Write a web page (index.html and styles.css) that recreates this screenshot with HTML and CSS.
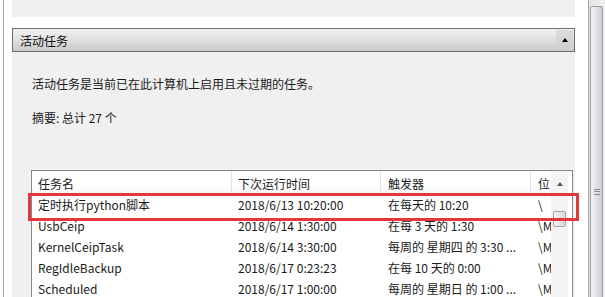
FILE: index.html
```html
<!DOCTYPE html>
<html lang="zh-CN">
  <head>
    <meta charset="UTF-8" />
    <title>活动任务</title>
    <link rel="stylesheet" href="styles.css">
  </head>

  <body>
    <div class="window">
      <div class="content">
        <div class="panel-top"></div>

        <div class="section">
          <div class="section-head">
            <span>活动任务</span>
            <span class="collapse"><span class="tri"></span></span>
          </div>
          <div class="section-body">
            <p class="desc">活动任务是当前已在此计算机上启用且未过期的任务。</p>
            <p class="summary">摘要: 总计 27 个</p>

            <div class="list">
              <div class="cols">
                <div class="row head">
                  <div class="cell">任务名</div>
                  <div class="cell">下次运行时间</div>
                  <div class="cell">触发器</div>
                  <div class="cell">位</div>
                </div>
                <div class="row">
                  <div class="cell">定时执行python脚本</div>
                  <div class="cell">2018/6/13 10:20:00</div>
                  <div class="cell">在每天的 10:20</div>
                  <div class="cell">\</div>
                </div>
                <div class="row">
                  <div class="cell">UsbCeip</div>
                  <div class="cell">2018/6/14 1:30:00</div>
                  <div class="cell">在每 3 天的 1:30</div>
                  <div class="cell">\M</div>
                </div>
                <div class="row">
                  <div class="cell">KernelCeipTask</div>
                  <div class="cell">2018/6/14 3:30:00</div>
                  <div class="cell">每周的 星期四 的 3:30 ...</div>
                  <div class="cell">\M</div>
                </div>
                <div class="row">
                  <div class="cell">RegIdleBackup</div>
                  <div class="cell">2018/6/17 0:23:23</div>
                  <div class="cell">在每 10 天的 0:00</div>
                  <div class="cell">\M</div>
                </div>
                <div class="row">
                  <div class="cell">Scheduled</div>
                  <div class="cell">2018/6/17 1:00:00</div>
                  <div class="cell">每周的 星期日 的 1:00 ...</div>
                  <div class="cell">\M</div>
                </div>
              </div>

              <div class="lscroll">
                <span class="arrow up"></span>
                <span class="lthumb"></span>
                <span class="arrow down"></span>
              </div>

              <!-- 标注框 -->
              <div class="mark"></div>
            </div>
          </div>
        </div>
      </div>

      <div class="vscroll">
        <div class="thumb"><span class="grip"></span></div>
      </div>
    </div>
  </body>
</html>
```

FILE: styles.css
```css
html,
body {
  margin: 0;
  padding: 0;
  background: #fff;
  overflow: hidden;
}

body {
  font: 12px "Noto Sans CJK SC", "Microsoft YaHei", sans-serif;
  color: #1a1a1a;
}

.window {
  display: flex;
  width: 605px;
  height: 297px;
  overflow: hidden;
}

/* 左侧细线 + 内容区 */
.content {
  width: 570px;
  margin-left: 3px;
  padding-left: 8px;
  padding-right: 13px;
  border-left: 1px solid #a9a9a9;
  box-sizing: content-box;
}

.panel-top {
  height: 17px;
  background: #f0f0f0;
}

.section {
  margin-top: 11px;
}

.section-head {
  display: flex;
  align-items: center;
  justify-content: space-between;
  height: 22px;
  padding-left: 7px;
  border: 1px solid #6e6e6e;
  background: linear-gradient(#f2f2f2, #e2e2e2 45%, #c9c9c9);
  color: #111;
}

.collapse {
  display: flex;
  align-items: center;
  justify-content: center;
  width: 17px;
  height: 20px;
  margin-right: 1px;
  background: linear-gradient(#dcdcdc, #cfcfcf);
}

.tri {
  width: 0;
  height: 0;
  border-left: 3px solid transparent;
  border-right: 3px solid transparent;
  border-bottom: 4px solid #000;
}

.section-body {
  height: 260px;
  padding: 1px 2px 0 19px;
  background: #f0f0f0;
}

.section-body p {
  margin: 0;
  padding-left: 1px;
  line-height: 16px;
}

.desc {
  margin-top: 23px !important;
}

.summary {
  margin-top: 18px !important;
}

/* 列表 */
.list {
  position: relative;
  display: flex;
  margin-top: 44px;
  height: 140px;
  border: 1px solid #828790;
  background: #fff;
}

.cols {
  width: 519px;
  overflow: hidden;
}

.row {
  display: grid;
  grid-template-columns: 200px 149px 150px 20px;
  height: 21px;
  line-height: 21px;
}

.row.head {
  height: 23px;
  line-height: 25px;
  background: linear-gradient(#fff, #fff 60%, #f4f5f7);
}

.cell {
  padding-left: 6px;
  white-space: nowrap;
}

.cell:nth-child(3),
.cell:nth-child(4) {
  padding-left: 7px;
}

.head .cell {
  border-right: 1px solid #e2e3e5;
}

.head .cell:last-child {
  border-right: 0;
}

.lscroll {
  position: relative;
  width: 16px;
  background: #f3f3f3;
  border-left: 1px solid #f6f6f6;
}

.arrow {
  position: absolute;
  left: 5px;
  width: 0;
  height: 0;
  border-left: 3px solid transparent;
  border-right: 3px solid transparent;
}

.arrow.up {
  top: 11px;
  border-bottom: 4px solid #555;
}

.arrow.down {
  bottom: -24px;
  border-top: 4px solid #555;
}

.lthumb {
  position: absolute;
  top: 40px;
  left: 1px;
  width: 13px;
  height: 16px;
  border: 1px solid #a3a3a3;
  border-radius: 2px;
  background: linear-gradient(90deg, #f4f4f4, #dadada);
  box-sizing: border-box;
}

.mark {
  position: absolute;
  left: -4px;
  top: 22px;
  width: 551px;
  height: 28px;
  border: 3px solid #e3383a;
  box-sizing: border-box;
}

/* 外侧滚动条 */
.vscroll {
  position: relative;
  width: 16px;
  border-left: 1px solid #a6a6a6;
  background: linear-gradient(90deg, #e4e4e4, #f2f2f2);
}

.thumb {
  position: absolute;
  top: 6px;
  left: 1px;
  width: 13px;
  height: 330px;
  border: 1px solid #9b9b9b;
  border-radius: 2px;
  background: linear-gradient(90deg, #f5f5f8, #e0e0e6 50%, #cfcfd6);
  box-sizing: border-box;
}

.grip {
  position: absolute;
  top: 182px;
  left: 3px;
  width: 6px;
  height: 6px;
  border-top: 1px solid #8a8a8a;
  border-bottom: 1px solid #8a8a8a;
  box-sizing: border-box;
}

.grip::after {
  content: "";
  position: absolute;
  top: 1px;
  left: 0;
  width: 6px;
  border-top: 1px solid #8a8a8a;
}
```
